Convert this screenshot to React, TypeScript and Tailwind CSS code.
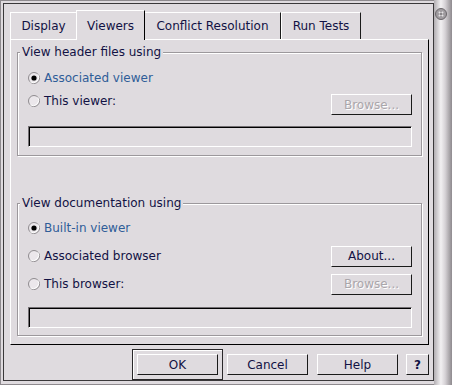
import React from "react";

function RadioDot({ checked }: { checked?: boolean }) {
  return (
    <svg width="12" height="12" viewBox="0 0 12 12" className="shrink-0">
      <circle cx="6" cy="6" r="5.5" fill="#ebe7eb" stroke="#8e8a8e" />
      <path d="M2.2 9.8 A5.5 5.5 0 0 0 9.8 2.2" fill="none" stroke="#ffffff" strokeWidth="1" />
      {checked && <circle cx="6" cy="6" r="2.6" fill="#000000" />}
    </svg>
  );
}

function Radio({ label, checked }: { label: string; checked?: boolean }) {
  return (
    <div className="flex items-center gap-[4px]">
      <RadioDot checked={checked} />
      <span className={checked ? "text-[#2f5d98]" : "text-[#121244]"}>{label}</span>
    </div>
  );
}

function Btn({
  children,
  disabled,
  wide = true,
}: {
  children: React.ReactNode;
  disabled?: boolean;
  wide?: boolean;
}) {
  return (
    <button
      className={`${wide ? "w-[81px]" : "w-[23px] font-bold"} h-[21px] shrink-0 border border-t-white border-l-white border-r-[#1a1a1a] border-b-[#1a1a1a] flex items-center justify-center ${
        disabled ? "text-[#aaa6aa] [text-shadow:1px_1px_0_#ffffff]" : "text-[#121244]"
      }`}
    >
      {children}
    </button>
  );
}

function Field() {
  return (
    <div className="h-[21px] w-full border border-t-[#747074] border-l-[#747074] border-r-white border-b-white shadow-[inset_1px_1px_0_#000000]" />
  );
}

function Group({ title, children, className }: { title: string; children: React.ReactNode; className: string }) {
  return (
    <fieldset
      className={`${className} border border-[#9c989c] shadow-[inset_1px_1px_0_#ffffff,1px_1px_0_#ffffff]`}
    >
      <legend className="ml-[2px] px-[2px] leading-[14px] bg-[#dfdbdf] text-[#121244]">{title}</legend>
      {children}
    </fieldset>
  );
}

export default function App() {
  return (
    <div className="flex w-[452px] h-[385px] bg-[#dfdbdf] text-[12px] leading-[14px] text-[#121244] font-['DejaVu_Sans',Verdana,sans-serif] overflow-hidden">
      <div className="flex flex-col w-[434px] h-[385px] border-l border-t border-b border-[#8e8a8e] pl-[2px] pt-[2px] pb-[3px]">
        <div className="flex-1 flex flex-col border border-[#3a383a] pt-[6px]">
          {/* tabs */}
          <div className="flex items-end h-[29px] pl-[6px]">
            <div className="h-[27px] w-[66px] border-t border-l border-white flex items-center justify-center">
              Display
            </div>
            <div className="relative z-10 -mb-px h-[30px] w-[69px] border-t border-l border-r border-t-white border-l-white border-r-black bg-[#dfdbdf] flex items-center justify-center">
              Viewers
            </div>
            <div className="h-[27px] w-[136px] border-t border-r border-t-white border-r-[#1a1a1a] flex items-center justify-center">
              Conflict Resolution
            </div>
            <div className="h-[27px] w-[80px] border-t border-l border-r border-t-white border-l-white border-r-[#1a1a1a] flex items-center justify-center">
              Run Tests
            </div>
          </div>

          {/* panel */}
          <div className="ml-[6px] h-[306px] w-[419px] border border-t-white border-l-white border-r-black border-b-black px-[6px]">
            <Group title="View header files using" className="mt-[5px]">
              <div className="pl-[10px] pr-[9px] pb-[8px]">
                <div className="mt-[7px] h-[23px] flex items-center">
                  <Radio label="Associated viewer" checked />
                </div>
                <div className="h-[24px] flex items-center justify-between">
                  <Radio label="This viewer:" />
                  <div className="self-start mt-[5px]">
                    <Btn disabled>Browse...</Btn>
                  </div>
                </div>
                <div className="mt-[13px]">
                  <Field />
                </div>
              </div>
            </Group>

            <Group title="View documentation using" className="mt-[40px]">
              <div className="pl-[10px] pr-[9px] pb-[7px]">
                <div className="mt-[4px] h-[28px] flex items-center">
                  <Radio label="Built-in viewer" checked />
                </div>
                <div className="h-[28px] flex items-center justify-between">
                  <Radio label="Associated browser" />
                  <Btn>About...</Btn>
                </div>
                <div className="h-[28px] flex items-center justify-between">
                  <Radio label="This browser:" />
                  <Btn disabled>Browse...</Btn>
                </div>
                <div className="mt-[9px]">
                  <Field />
                </div>
              </div>
            </Group>
          </div>

          {/* button bar */}
          <div className="h-[35px] pt-[4px] pr-[4px] flex items-center justify-end">
            <div className="w-[91px] h-[31px] border border-t-[#2a282a] border-l-[#2a282a] border-r-[#2a282a] border-b-[#2a282a] shadow-[inset_1px_1px_0_#ffffff] p-[4px]">
              <Btn>OK</Btn>
            </div>
            <div className="ml-[4px]">
              <Btn>Cancel</Btn>
            </div>
            <div className="ml-[9px]">
              <Btn>Help</Btn>
            </div>
            <div className="ml-[8px]">
              <Btn wide={false}>?</Btn>
            </div>
          </div>
        </div>
      </div>

      {/* window frame edge */}
      <div className="w-[18px] h-[385px] bg-[linear-gradient(to_right,#b2aeb2,#f2f0f2_38%,#d6d2d6_62%,#8e8a8e)] pt-[8px] pl-[1px]">
        <svg width="12" height="12" viewBox="0 0 12 12">
          <circle cx="6" cy="6" r="5.5" fill="#a09ca0" stroke="#6a666a" />
          <path d="M3.8 3.8 L8.2 8.2 M8.2 3.8 L3.8 8.2" stroke="#e4e2e4" strokeWidth="1.4" />
          <circle cx="6" cy="6" r="1" fill="#6a666a" />
        </svg>
      </div>
    </div>
  );
}
